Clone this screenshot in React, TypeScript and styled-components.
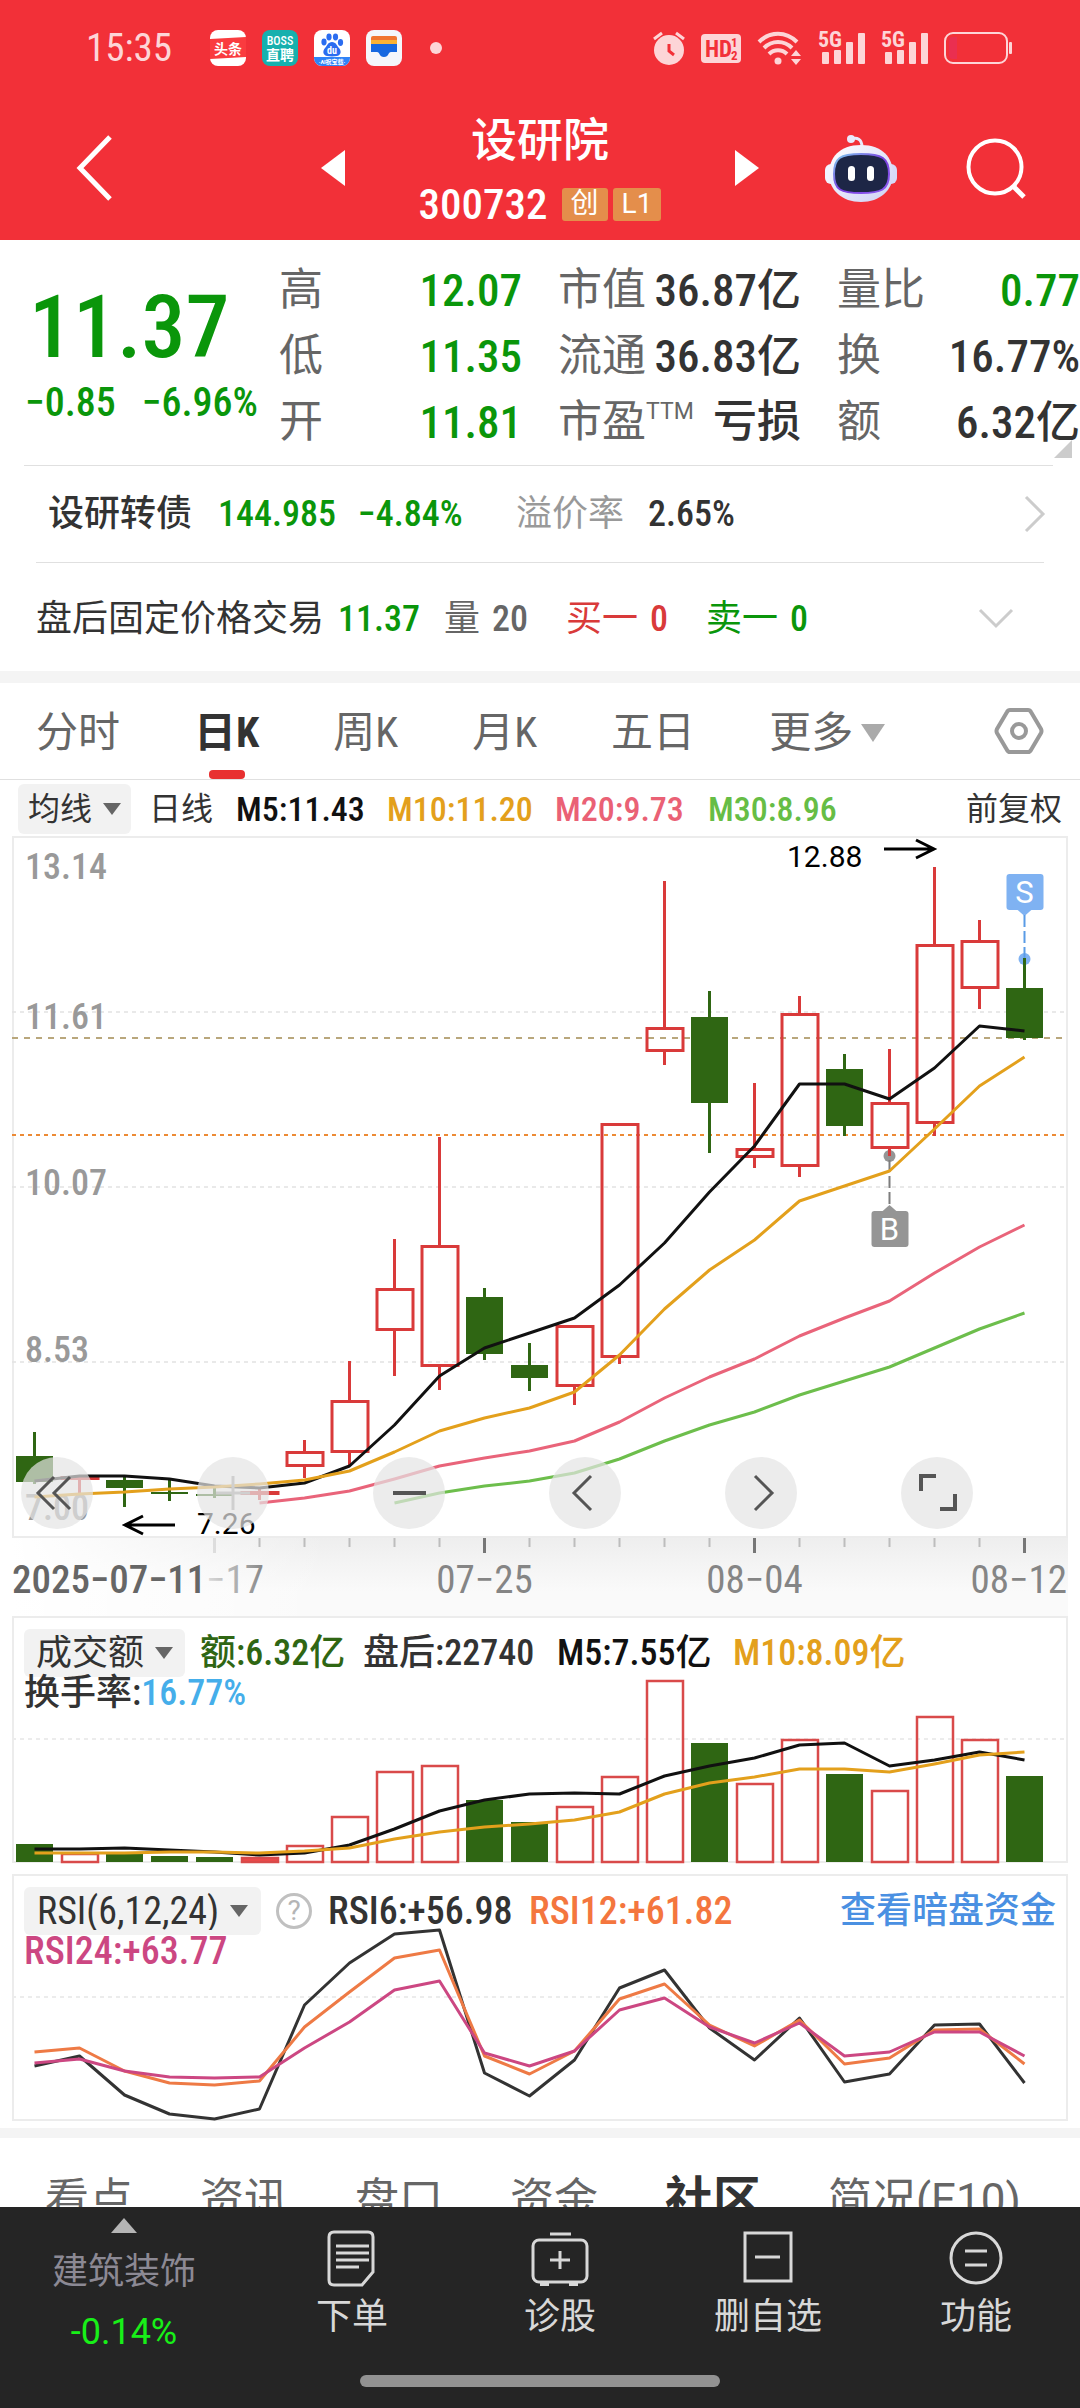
import React from 'react';
import styled, { createGlobalStyle } from 'styled-components';

const GREEN = '#0a960a';
const CANDLE_GREEN = '#2f6613';
const RED = '#d93a3a';
const ORANGE = '#e3a01c';
const FONT = "'Roboto Condensed', Roboto, 'Noto Sans CJK SC', sans-serif";
const WIDE_FONT = "Roboto, 'Noto Sans CJK SC', sans-serif";

const GlobalStyle = createGlobalStyle`
  * { box-sizing: border-box; }
  body { margin: 0; background: #fff; font-family: ${FONT}; color: #333; }
  button, select {
    font: inherit; color: inherit; background: none; border: 0; margin: 0; padding: 0;
    line-height: inherit; cursor: pointer;
  }
  svg { display: block; overflow: visible; }
  h1, dl, dd, dt { margin: 0; font-weight: inherit; }
`;

/* ---------- shell ---------- */

const Screen = styled.div`
  height: 100vh;
  display: flex;
  flex-direction: column;
  overflow: hidden;
  line-height: 1;
`;

const Content = styled.main`
  flex: 1;
  min-height: 0;
  overflow: hidden;
`;

const Divider = styled.div`
  height: ${(p: { $h: number }) => p.$h}px;
  background: #f4f4f4;
`;

/* ---------- header ---------- */

const Top = styled.header`
  flex: none;
  background: #f23038;
  color: #fff;
`;

const StatusBar = styled.div`
  height: 96px;
  padding: 0 68px 0 86px;
  display: flex;
  align-items: center;
  justify-content: space-between;
  color: #fdd5d7;
`;

const StatusGroup = styled.div`
  display: flex;
  align-items: center;
  gap: 16px;
`;

const Clock = styled.time`
  width: 108px;
  font-size: 39px;
`;

const TitleBar = styled.div`
  height: 144px;
  display: grid;
  grid-template-columns: 1fr 438px 1fr;
  align-items: center;
`;

const IconButton = styled.button`
  display: flex;
  align-items: center;
`;

const BackWrap = styled.div`
  padding-left: 76px;
`;

const Switcher = styled.div`
  display: flex;
  align-items: center;
  justify-content: space-between;
`;

const StockName = styled.div`
  padding-top: 6px;
  display: flex;
  flex-direction: column;
  align-items: center;
  gap: 20px;
`;

const Name = styled.h1`
  font-size: 46px;
  font-weight: 500;
`;

const CodeRow = styled.div`
  display: flex;
  align-items: center;
  gap: 5px;
  font-size: 43px;
  font-weight: 500;
`;

const Code = styled.span`
  padding-right: 9px;
`;

const Badge = styled.span`
  height: 33px;
  padding: 0 9px;
  display: flex;
  align-items: center;
  border-radius: 3px;
  background: #e48e4b;
  font-family: ${WIDE_FONT};
  font-size: 28px;
  font-weight: 400;
`;

const HeaderActions = styled.div`
  display: flex;
  align-items: center;
  justify-content: flex-end;
  gap: 68px;
  padding-right: 54px;
`;

/* ---------- quote ---------- */

const Quote = styled.section`
  display: grid;
  grid-template-columns: 279px 1fr;
  padding: 17px 0 10px;
  position: relative;
`;

const PriceBlock = styled.div`
  padding: 34px 0 0 25px;
  color: ${GREEN};
  font-weight: 500;
`;

const Price = styled.div`
  padding-left: 4px;
  font-size: 88px;
  line-height: 72px;
`;

const Change = styled.div`
  margin-top: 20px;
  display: flex;
  gap: 26px;
  font-size: 40px;
  white-space: nowrap;
`;

const Stats = styled.dl`
  display: grid;
  grid-template-columns: repeat(3, 1fr);
  column-gap: 36px;
`;

const Stat = styled.div`
  height: 66px;
  display: flex;
  align-items: center;
  justify-content: space-between;
  white-space: nowrap;
`;

const StatLabel = styled.dt`
  font-size: 44px;
  color: #666;
  display: flex;
`;

const Sup = styled.span`
  font-family: ${WIDE_FONT};
  font-size: 23px;
`;

const StatValue = styled.dd<{ $color?: string }>`
  font-size: 44px;
  font-weight: 500;
  color: ${(p) => p.$color || '#333'};
`;

const Num = styled.span`
  font-size: 45px;
`;

const Corner = styled.i`
  position: absolute;
  right: 8px;
  bottom: 7px;
  border-left: 18px solid transparent;
  border-bottom: 18px solid #ccc;
`;

const Rule = styled.hr<{ $l: number; $r: number }>`
  height: 1px;
  border: 0;
  margin: 0 ${(p) => p.$r}px 0 ${(p) => p.$l}px;
  background: #e0e0e0;
`;

const InfoRow = styled.section<{ $cols: string; $h: number; $l: number; $r: number }>`
  height: ${(p) => p.$h}px;
  padding: 0 ${(p) => p.$r}px 0 ${(p) => p.$l}px;
  display: grid;
  grid-template-columns: ${(p) => p.$cols};
  align-items: center;
  font-size: 36px;
  white-space: nowrap;
`;

const FixedPriceRow = styled(InfoRow)`
  padding-top: 3px;
`;

const Cell = styled.span<{ $color?: string; $num?: boolean; $w?: number }>`
  color: ${(p) => p.$color || '#333'};
  font-size: 36px;
  font-weight: ${(p) => p.$w || (p.$num ? 500 : 400)};
`;

const End = styled.button`
  justify-self: end;
`;

/* ---------- period tabs ---------- */

const PeriodTabs = styled.nav`
  height: 97px;
  padding: 0 36px;
  display: flex;
  align-items: stretch;
  justify-content: space-between;
  border-bottom: 1px solid #e0e0e0;
`;

const TabGroup = styled.div`
  display: flex;
  gap: 74px;
`;

const Tab = styled.button<{ $active?: boolean }>`
  padding-top: 4px;
  display: flex;
  align-items: center;
  gap: 8px;
  position: relative;
  font-size: 42px;
  color: ${(p) => (p.$active ? '#333' : '#666')};
  font-weight: ${(p) => (p.$active ? 700 : 400)};
  &::after {
    content: '';
    display: ${(p) => (p.$active ? 'block' : 'none')};
    position: absolute;
    left: 50%;
    bottom: 0;
    width: 36px;
    height: 9px;
    margin-left: -18px;
    border-radius: 4px;
    background: #e83030;
  }
`;

/* ---------- legends ---------- */

const Legend = styled.div<{ $cols: string }>`
  display: grid;
  grid-template-columns: ${(p) => p.$cols};
  align-items: center;
  white-space: nowrap;
`;

const MaLegend = styled(Legend)`
  height: 56px;
  padding: 2px 18px 0;
  font-size: 32px;
`;

const Tag = styled.span<{ $color?: string }>`
  color: ${(p) => p.$color || '#333'};
`;

const ValueTag = styled(Tag)`
  font-weight: 500;
`;

const MaTag = styled(ValueTag)`
  font-size: 34px;
`;

const Picker = styled.label<{ $h: number; $pad: number }>`
  justify-self: start;
  height: ${(p) => p.$h}px;
  padding: 0 ${(p) => p.$pad}px;
  display: inline-flex;
  align-items: center;
  gap: 10px;
  border-radius: 6px;
  background: #f2f2f2;
`;

const PickerSelect = styled.select`
  appearance: none;
  height: 100%;
  outline: none;
`;

/* ---------- charts ---------- */

const Frame = styled.section`
  margin: 0 12px;
  border: 2px solid #ececec;
  display: grid;
  position: relative;
`;

const Plot = styled.svg`
  grid-area: 1 / 1;
  width: 100%;
  height: auto;
`;

const PanelLegend = styled.div<{ $size: number }>`
  grid-area: 1 / 1;
  z-index: 1;
  padding: 11px 10px 0;
  font-size: ${(p) => p.$size}px;
`;

const SecondLine = styled.div`
  line-height: 32px;
`;

const ChartTools = styled.div`
  position: absolute;
  left: 7px;
  right: 93px;
  bottom: 7px;
  display: flex;
  justify-content: space-between;
`;

const RoundButton = styled.button`
  width: 72px;
  height: 72px;
  border-radius: 50%;
  background: rgba(228, 228, 228, 0.7);
  display: flex;
  align-items: center;
  justify-content: center;
`;

const Axis = styled.div`
  margin: 0 12px;
  padding-bottom: 2px;
  background: linear-gradient(90deg, #fff, rgba(255, 255, 255, 0) 30%),
    linear-gradient(#eeeeee, #fafafa 70%);
`;

const Space = styled.div<{ $h: number }>`
  height: ${(p) => p.$h}px;
`;

const HelpButton = styled.button`
  width: 36px;
  height: 36px;
  border: 3px solid #c0c0c0;
  border-radius: 50%;
  color: #b5b5b5;
  font-family: ${WIDE_FONT};
  font-size: 28px;
  line-height: 30px;
  text-align: center;
`;

const FundLink = styled.a`
  justify-self: end;
  font-size: 36px;
  font-weight: 500;
  color: #4a90e2;
  text-decoration: none;
`;

/* ---------- lower tabs and dock ---------- */

const InfoTabs = styled.nav`
  height: 124px;
  padding-left: 45px;
  display: flex;
  align-items: center;
  gap: 67px;
  font-family: ${WIDE_FONT};
  white-space: nowrap;
`;

const InfoTab = styled.button<{ $active?: boolean }>`
  font-size: ${(p) => (p.$active ? 48 : 44)}px;
  font-weight: ${(p) => (p.$active ? 700 : 400)};
  color: ${(p) => (p.$active ? '#333' : '#666')};
`;

const Dock = styled.footer`
  flex: none;
  height: 201px;
  background: #252525;
  color: #d8d8d8;
  display: flex;
  flex-direction: column;
  justify-content: space-between;
  padding-bottom: 21px;
`;

const DockRow = styled.nav`
  display: grid;
  grid-template-columns: 248px repeat(4, 1fr);
`;

const DockItem = styled.button`
  padding-top: 22px;
  display: flex;
  flex-direction: column;
  align-items: center;
  gap: 12px;
  font-size: 36px;
`;

const Sector = styled.button`
  padding: 11px 0 0;
  display: flex;
  flex-direction: column;
  align-items: center;
  font-size: 36px;
  color: #8c8994;
`;

const SectorName = styled.span`
  padding: 21px 0 24px;
`;

const SectorChange = styled.span`
  font-family: ${WIDE_FONT};
  color: #18f018;
`;

const HomeBar = styled.i`
  width: 360px;
  height: 12px;
  border-radius: 6px;
  background: #929292;
  align-self: center;
`;

/* ---------- data ---------- */

const stats: { label: string; sup?: string; num?: string; unit?: string; color?: string }[] = [
  { label: '高', num: '12.07', color: GREEN },
  { label: '市值', num: '36.87', unit: '亿' },
  { label: '量比', num: '0.77', color: GREEN },
  { label: '低', num: '11.35', color: GREEN },
  { label: '流通', num: '36.83', unit: '亿' },
  { label: '换', num: '16.77%' },
  { label: '开', num: '11.81', color: GREEN },
  { label: '市盈', sup: 'TTM', unit: '亏损' },
  { label: '额', num: '6.32', unit: '亿' },
];

type Candle = [up: 0 | 1, high: number, top: number, bottom: number, low: number];
const candles: Candle[] = [
  [0, 1432, 1456, 1482, 1484],
  [1, 1475, 1476, 1479, 1493],
  [0, 1476, 1480, 1488, 1507],
  [0, 1480, 1492, 1494, 1501],
  [0, 1487, 1494, 1496, 1498],
  [1, 1488, 1491, 1494, 1500],
  [1, 1440, 1451, 1467, 1478],
  [1, 1361, 1400, 1453, 1466],
  [1, 1239, 1288, 1331, 1376],
  [1, 1137, 1245, 1367, 1390],
  [0, 1288, 1297, 1354, 1360],
  [0, 1343, 1365, 1378, 1391],
  [1, 1325, 1325, 1387, 1405],
  [1, 1123, 1123, 1358, 1364],
  [1, 881, 1027, 1052, 1065],
  [0, 991, 1017, 1103, 1153],
  [1, 1083, 1148, 1158, 1168],
  [1, 996, 1013, 1167, 1177],
  [0, 1054, 1069, 1126, 1136],
  [1, 1049, 1102, 1149, 1156],
  [1, 867, 944, 1124, 1136],
  [1, 920, 940, 989, 1009],
  [0, 958, 988, 1038, 1040],
];

const ma5 = [1481, 1476, 1476, 1479, 1486, 1488, 1483, 1466, 1425, 1376, 1348, 1333, 1318, 1285, 1243, 1192, 1146, 1084, 1084, 1099, 1068, 1026, 1031];
const ma10 = [1497, 1494, 1492, 1489, 1487, 1484, 1480, 1471, 1452, 1431, 1418, 1408, 1392, 1355, 1309, 1270, 1240, 1201, 1186, 1171, 1129, 1086, 1057];
const ma20 = [1503, 1498, 1491, 1479, 1466, 1458, 1451, 1441, 1422, 1398, 1377, 1359, 1336, 1318, 1301, 1273, 1247, 1225];
const ma30 = [1503, 1493, 1486, 1481, 1473, 1459, 1441, 1425, 1412, 1395, 1381, 1367, 1348, 1329, 1313];

const volume = [18, 9, 9, 6, 5, 5, 17, 46, 91, 97, 62, 40, 56, 86, 182, 119, 79, 123, 88, 72, 146, 123, 86];
const volMa5 = [13, 13, 14, 12, 10, 7, 9, 17, 33, 51, 62, 68, 69, 68, 86, 96, 104, 117, 119, 96, 102, 110, 102];
const volMa10 = [9, 9, 9, 10, 10, 9, 11, 14, 23, 30, 35, 38, 42, 50, 68, 79, 85, 93, 93, 90, 98, 107, 110];

const rsi6 = [54, 64, 25, 6, 1, 11, 115, 157, 186, 190, 47, 24, 60, 132, 150, 92, 60, 102, 38, 46, 95, 96, 37];
const rsi12 = [68, 72, 49, 37, 35, 39, 93, 128, 162, 170, 64, 46, 69, 121, 136, 95, 74, 100, 56, 62, 90, 91, 56];
const rsi24 = [57, 61, 49, 43, 42, 43, 72, 98, 130, 139, 67, 54, 69, 110, 122, 93, 77, 97, 64, 68, 88, 88, 64];

const PANEL_H = 243;
const xAt = (i: number) => 34.5 + i * 45;
const up = (v: number) => PANEL_H + 1 - v;

/* ---------- small parts ---------- */

const Line = ({ ys, start = 0, color }: { ys: number[]; start?: number; color: string }) => (
  <polyline
    points={ys.map((y, i) => `${xAt(i + start)},${y}`).join(' ')}
    fill="none"
    stroke={color}
    strokeWidth="3"
    strokeLinejoin="round"
  />
);

const Grid = ({ y, color = '#e2e2e2', dash = '4 4', w = 1.5 }: { y: number; color?: string; dash?: string; w?: number }) => (
  <line x1="12" x2="1066" y1={y} y2={y} stroke={color} strokeWidth={w} strokeDasharray={dash} />
);

const Caret = ({ w = 18, h = 12, color = '#666' }: { w?: number; h?: number; color?: string }) => (
  <svg width={w} height={h} viewBox="0 0 18 12" preserveAspectRatio="none" aria-hidden="true">
    <path d="M0 0h18L9 12z" fill={color} />
  </svg>
);

const Picked = ({ label, name, h, pad }: { label: string; name: string; h: number; pad: number }) => (
  <Picker $h={h} $pad={pad}>
    <PickerSelect aria-label={name}>
      <option>{label}</option>
    </PickerSelect>
    <Caret />
  </Picker>
);

const Signal = () => (
  <svg width="47" height="36" viewBox="0 0 47 36" fill="#fdd5d7" aria-label="5G">
    <text x="0" y="17" fontSize="22" fontWeight="700" fontFamily={FONT}>5G</text>
    <rect x="4" y="22" width="7" height="12" rx="1" />
    <rect x="16" y="20" width="7" height="14" rx="1" />
    <rect x="28" y="12" width="7" height="22" rx="1" />
    <rect x="40" y="3" width="7" height="31" rx="1" />
  </svg>
);

const LeftApps = () => (
  <StatusGroup>
    <svg width="36" height="36" viewBox="0 0 36 36" aria-label="头条">
      <rect width="36" height="36" rx="8" fill="#fff" />
      <path d="M0 9l36-2v20L0 29z" fill="#fa3b3f" />
      <text x="18" y="24" fontSize="14" fontWeight="700" fill="#fff" textAnchor="middle" fontFamily={FONT}>头条</text>
    </svg>
    <svg width="36" height="36" viewBox="0 0 36 36" aria-label="BOSS直聘">
      <rect width="36" height="36" rx="8" fill="#16b0ae" />
      <text x="18" y="15" fontSize="12" fontWeight="500" fill="#fff" textAnchor="middle" fontFamily={FONT}>BOSS</text>
      <text x="18" y="30" fontSize="14" fontWeight="700" fill="#fff" textAnchor="middle" fontFamily={FONT}>直聘</text>
    </svg>
    <svg width="36" height="36" viewBox="0 0 36 36" aria-label="百度">
      <clipPath id="baiduClip"><rect width="36" height="36" rx="8" /></clipPath>
      <g clipPath="url(#baiduClip)">
        <rect width="36" height="36" fill="#fff" />
        <g fill="#2a6cf0">
          <ellipse cx="10" cy="12" rx="2.6" ry="3.4" />
          <ellipse cx="15" cy="7" rx="2.6" ry="3.4" />
          <ellipse cx="21.5" cy="7" rx="2.6" ry="3.4" />
          <ellipse cx="26.5" cy="12.5" rx="2.6" ry="3.4" />
          <path d="M18 12c4 0 5 4 7 6s3 7-2 8c-3 .5-7 .5-10 0-5-1-4-6-2-8s3-6 7-6z" />
          <rect y="27" width="36" height="9" fill="#2f83f7" />
        </g>
      </g>
      <text x="18" y="24" fontSize="10" fontWeight="700" fill="#fff" textAnchor="middle" fontFamily={FONT}>du</text>
      <text x="18" y="34" fontSize="6" fontWeight="700" fill="#fff" textAnchor="middle" fontFamily={FONT}>·AI祝宝载·</text>
    </svg>
    <svg width="36" height="36" viewBox="0 0 36 36" aria-hidden="true">
      <rect width="36" height="36" rx="8" fill="#f4f6fb" />
      <path d="M5 8q0-2 2-2h22q2 0 2 2v4H5z" fill="#f07430" />
      <path d="M5 10h26v6H5z" fill="#f9b233" />
      <path d="M5 14h26v8h-6c-3 0-2 5-7 5s-4-5-7-5H5z" fill="#1668e0" />
    </svg>
    <svg width="62" height="36" viewBox="0 0 62 36" aria-hidden="true">
      <circle cx="18" cy="18" r="6" fill="#fdd5d7" />
    </svg>
  </StatusGroup>
);

const RightStatus = () => (
  <StatusGroup>
    <svg width="32" height="36" viewBox="1 0 32 36" aria-hidden="true">
      <circle cx="17" cy="20" r="15" fill="#fdd5d7" />
      <path d="M2 9l8-6M32 9l-8-6" stroke="#fdd5d7" strokeWidth="3" />
      <path d="M17 14v7l5 4" stroke="#f23038" strokeWidth="3" fill="none" />
    </svg>
    <svg width="40" height="29" viewBox="0 0 40 29" aria-label="HD 1 2">
      <rect width="40" height="29" rx="4" fill="#fdd5d7" />
      <g fill="#f23038" fontFamily={FONT} fontWeight="700">
        <text x="4" y="23" fontSize="23">HD</text>
        <text x="30" y="13" fontSize="13">1</text>
        <text x="30" y="26" fontSize="13">2</text>
      </g>
    </svg>
    <svg width="45" height="36" viewBox="0 0 45 36" aria-hidden="true">
      <g fill="none" stroke="#fdd5d7" strokeWidth="4">
        <path d="M2 12c11-11 27-11 38 0" />
        <path d="M7 18c8-8 20-8 28 0" />
        <path d="M12 24c5-5 13-5 18 0" />
      </g>
      <circle cx="21" cy="31" r="3.5" fill="#fdd5d7" />
      <path d="M34 26l5-6 5 6zM34 29l5 6 5-6z" fill="#fdd5d7" />
    </svg>
    <Signal />
    <Signal />
    <svg width="68" height="32" viewBox="0 0 68 32" aria-hidden="true">
      <rect x="1" y="1" width="62" height="30" rx="8" fill="none" stroke="#fdd5d7" strokeWidth="2" />
      <path d="M5 9q0-4 4-4h4v22H9q-4 0-4-4z" fill="#ea2f50" />
      <rect x="65" y="10" width="3" height="12" rx="1" fill="#fdd5d7" />
    </svg>
  </StatusGroup>
);

const Robot = () => (
  <svg width="74" height="70" viewBox="0 0 74 70" aria-hidden="true">
    <defs>
      <linearGradient id="shell" x1="0" y1="0" x2="1" y2="1">
        <stop offset="0" stopColor="#fff" />
        <stop offset="1" stopColor="#cdd0f5" />
      </linearGradient>
      <linearGradient id="glow" x1="0" y1="0" x2="1" y2="1">
        <stop offset="0" stopColor="#7fd0ee" />
        <stop offset="0.5" stopColor="#7a3fe0" />
        <stop offset="1" stopColor="#8c5cf0" />
      </linearGradient>
    </defs>
    <path d="M27 6c6-2 11 0 11 8" fill="none" stroke="#e9eafc" strokeWidth="3" />
    <circle cx="27" cy="6" r="4" fill="#e9eafc" />
    <rect x="1" y="31" width="12" height="20" rx="6" fill="#f2f3ff" />
    <rect x="61" y="31" width="12" height="20" rx="6" fill="#d7daf8" />
    <path d="M37 12c22 0 32 13 32 29S56 69 37 69 5 57 5 41s10-29 32-29z" fill="url(#shell)" />
    <path d="M37 21c21 0 28 4 28 20S57 60 37 60 10 57 10 41s6-20 27-20z" fill="#1d2646" stroke="url(#glow)" strokeWidth="2" />
    <rect x="24" y="33" width="7" height="15" rx="3.5" fill="#fff" />
    <rect x="43" y="33" width="7" height="15" rx="3.5" fill="#fff" />
  </svg>
);

const SettingsIcon = () => (
  <svg width="50" height="48" viewBox="0 0 50 48" fill="none" stroke="#999" strokeWidth="4" aria-hidden="true">
    <path d="M16 3h18q2 0 3 2l10 17q1 2 0 4L37 43q-1 2-3 2H16q-2 0-3-2L3 26q-1-2 0-4L13 5q1-2 3-2z" />
    <circle cx="25" cy="24" r="7" />
  </svg>
);

const toolIcons: [string, React.ReactNode][] = [
  ['最左', <path d="M17 4L1 20l16 16M33 4L17 20l16 16" />],
  ['放大', <path d="M20 3v34M3 20h34" stroke="#cfcfcf" />],
  ['缩小', <path d="M4 20h33" strokeWidth="4" />],
  ['向左', <path d="M26 3L9 20l17 17" />],
  ['向右', <path d="M14 3l17 17-17 17" />],
  ['全屏', <path d="M19 3H4v15M23 36h15V21" strokeWidth="4" />],
];

const dockItems: [string, React.ReactNode][] = [
  ['下单', <><path d="M8 3h34q5 0 5 5v35L36 56H8q-5 0-5-5V8q0-5 5-5z" /><path d="M10 17h33M10 24h33M10 31h33M10 38h23" /></>],
  ['诊股', <><rect x="-1" y="11" width="54" height="42" rx="6" /><path d="M26 22v18M16 31h20M16 5h21" /><path d="M6 55h9M35 55h9" strokeWidth="4" /></>],
  ['删自选', <><rect x="3" y="4" width="46" height="48" /><path d="M13 28h25" /></>],
  ['功能', <><circle cx="26" cy="29" r="25" /><path d="M15 22h22M15 36h22" /></>],
];

/* ---------- chart blocks ---------- */

const colorOf = (c: Candle) => (c[0] ? RED : CANDLE_GREEN);

const KLine = () => (
  <Frame aria-label="日K线图">
    <Plot viewBox="14 838 1052 698" fontFamily={FONT}>
      <Grid y={1012} />
      <Grid y={1187} />
      <Grid y={1362} />
      <Grid y={1038} color="#b9a77c" dash="6 6" w={2} />
      <Grid y={1135} color="#ec8a35" w={2} />
      <g fill="#999" fontSize="36" fontWeight="500">
        <text x="25" y="879">13.14</text>
        <text x="25" y="1029">11.61</text>
        <text x="25" y="1195">10.07</text>
        <text x="25" y="1362">8.53</text>
        <text x="25" y="1520">7.00</text>
      </g>
      <g fill="#959595">
        <circle cx={xAt(19)} cy="1156" r="6" />
        <path d={`M${xAt(19) - 8} 1212l8-7 8 7z`} />
        <rect x={xAt(19) - 18} y="1211" width="37" height="36" rx="3" />
        <line x1={xAt(19)} x2={xAt(19)} y1="1160" y2="1205" stroke="#7d7d7d" strokeWidth="2" strokeDasharray="12 4" />
      </g>
      <g fill="#7fb2f2">
        <circle cx={xAt(22)} cy="959" r="6" />
        <path d={`M${xAt(22) - 8} 909l8 7 8-7z`} />
        <rect x={xAt(22) - 18} y="874" width="37" height="36" rx="3" />
        <line x1={xAt(22)} x2={xAt(22)} y1="915" y2="958" stroke="#5a9be6" strokeWidth="2" strokeDasharray="12 4" />
      </g>
      <g fill="#fff" fontSize="31" textAnchor="middle" fontFamily={WIDE_FONT}>
        <text x={xAt(19)} y="1240">B</text>
        <text x={xAt(22)} y="903">S</text>
      </g>
      {candles.map((c, i) => {
        const [isUp, hi, t, b, lo] = c;
        const x = xAt(i);
        return (
          <g key={i} stroke={colorOf(c)} strokeWidth="3">
            <path d={`M${x} ${hi}V${t}M${x} ${b}V${lo}`} />
            {isUp ? (
              <rect x={x - 17.5} y={t + 1.5} width="36" height={Math.max(b - t - 3, 1)} fill="none" />
            ) : (
              <rect x={x - 18.5} y={t} width="37" height={b - t} fill={CANDLE_GREEN} stroke="none" />
            )}
          </g>
        );
      })}
      <Line ys={ma5} color="#111" />
      <Line ys={ma10} color={ORANGE} />
      <Line ys={ma20} start={5} color="#e9647a" />
      <Line ys={ma30} start={8} color="#6dbe4c" />
      <g fontSize="30" fill="#000" fontFamily={WIDE_FONT}>
        <text x="787" y="867">12.88</text>
        <text x="197" y="1534">7.26</text>
      </g>
      <path d="M884 849h50M916 840l18 9-18 9M175 1525h-50M143 1516l-18 9 18 9" fill="none" stroke="#000" strokeWidth="3" />
    </Plot>
    <ChartTools>
      {toolIcons.map(([name, icon]) => (
        <RoundButton key={name} aria-label={name}>
          <svg width="40" height="40" viewBox="0 0 40 40" fill="none" stroke="#555" strokeWidth="3">{icon}</svg>
        </RoundButton>
      ))}
    </ChartTools>
  </Frame>
);

const DateAxis = () => (
  <Axis>
    <Plot viewBox="12 1538 1056 76" fontFamily={FONT} fontSize="39" fill="#858585">
      <defs>
        <linearGradient id="dateFade" gradientUnits="userSpaceOnUse" x1="205" x2="262" y1="0" y2="0">
          <stop offset="0" stopColor="#ddd" />
          <stop offset="1" stopColor="#8a8a8a" />
        </linearGradient>
      </defs>
      {candles.map((_, i) => {
        if (i < 4) return null;
        const major = (i - 4) % 6 === 0;
        const color = i === 4 ? '#ddd' : major ? '#777' : '#bdbdbd';
        return (
          <line key={i} x1={xAt(i)} x2={xAt(i)} y1="1538" y2={major ? 1553 : 1547} stroke={color} strokeWidth={major ? 3 : 2} />
        );
      })}
      <text x="12" y="1593" fill="#666" fontWeight="500">2025−07−11</text>
      <text x="264" y="1593" fill="url(#dateFade)" textAnchor="end">−17</text>
      <text x={xAt(10)} y="1593" textAnchor="middle">07−25</text>
      <text x={xAt(16)} y="1593" textAnchor="middle">08−04</text>
      <text x="1067" y="1593" textAnchor="end">08−12</text>
    </Plot>
  </Axis>
);

const VolumePanel = () => (
  <Frame aria-label="成交额">
    <Plot viewBox={`14 0 1052 ${PANEL_H}`}>
      <Grid y={121} w={2} color="#ececec" />
      {volume.map((v, i) =>
        candles[i][0] ? (
          <rect key={i} x={xAt(i) - 17.5} y={up(v) + 1} width="36" height={v - 1} fill={i === 5 ? '#f04848' : 'none'} stroke="#d94a4a" strokeWidth="2.5" />
        ) : (
          <rect key={i} x={xAt(i) - 18.5} y={up(v)} width="37" height={v} fill={CANDLE_GREEN} />
        ),
      )}
      <Line ys={volMa5.map(up)} color="#111" />
      <Line ys={volMa10.map(up)} color={ORANGE} />
    </Plot>
    <PanelLegend $size={36}>
      <Legend $cols="176px 163px 194px 176px 1fr">
        <Picked label="成交额" name="指标" h={48} pad={12} />
        <ValueTag $color={CANDLE_GREEN}>额:6.32亿</ValueTag>
        <ValueTag>盘后:22740</ValueTag>
        <ValueTag $color="#111">M5:7.55亿</ValueTag>
        <ValueTag $color={ORANGE}>M10:8.09亿</ValueTag>
      </Legend>
      <SecondLine>
        <ValueTag>换手率:</ValueTag>
        <ValueTag $color="#45aeea">16.77%</ValueTag>
      </SecondLine>
    </PanelLegend>
  </Frame>
);

const RsiPanel = () => (
  <Frame aria-label="RSI">
    <Plot viewBox={`14 0 1052 ${PANEL_H}`}>
      <Grid y={121} w={2} color="#ececec" />
      <Line ys={rsi6.map(up)} color="#333" />
      <Line ys={rsi12.map(up)} color="#ee7a45" />
      <Line ys={rsi24.map(up)} color="#cc4782" />
    </Plot>
    <PanelLegend $size={38}>
      <Legend $cols="252px 52px 201px auto 1fr">
        <Picked label="RSI(6,12,24)" name="RSI指标" h={48} pad={13} />
        <HelpButton aria-label="帮助">?</HelpButton>
        <ValueTag>RSI6:+56.98</ValueTag>
        <ValueTag $color="#f4763e">RSI12:+61.82</ValueTag>
        <FundLink href="#fund">查看暗盘资金</FundLink>
      </Legend>
      <SecondLine>
        <ValueTag $color="#cc4782">RSI24:+63.77</ValueTag>
      </SecondLine>
    </PanelLegend>
  </Frame>
);

/* ---------- page ---------- */

export default function App() {
  return (
    <Screen>
      <GlobalStyle />
      <Top>
        <StatusBar>
          <StatusGroup>
            <Clock>15:35</Clock>
            <LeftApps />
          </StatusGroup>
          <RightStatus />
        </StatusBar>
        <TitleBar>
          <BackWrap>
            <IconButton aria-label="返回">
              <svg width="36" height="66" viewBox="0 0 36 66" fill="none" stroke="#fff" strokeWidth="5">
                <path d="M34 2L4 33l30 31" />
              </svg>
            </IconButton>
          </BackWrap>
          <Switcher>
            <IconButton aria-label="上一只">
              <svg width="24" height="36" viewBox="0 0 24 36" fill="#fff"><path d="M24 0v36L0 18z" /></svg>
            </IconButton>
            <StockName>
              <Name>设研院</Name>
              <CodeRow>
                <Code>300732</Code>
                <Badge>创</Badge>
                <Badge>L1</Badge>
              </CodeRow>
            </StockName>
            <IconButton aria-label="下一只">
              <svg width="24" height="36" viewBox="0 0 24 36" fill="#fff"><path d="M0 0v36l24-18z" /></svg>
            </IconButton>
          </Switcher>
          <HeaderActions>
            <IconButton aria-label="智能助手"><Robot /></IconButton>
            <IconButton aria-label="搜索">
              <svg width="60" height="60" viewBox="0 0 60 60" fill="none" stroke="#fff" strokeWidth="4">
                <circle cx="29" cy="29" r="26.5" />
                <path d="M47 48l11 11" strokeWidth="5" />
              </svg>
            </IconButton>
          </HeaderActions>
        </TitleBar>
      </Top>

      <Content>
        <Quote>
          <PriceBlock>
            <Price>11.37</Price>
            <Change>
              <span>−0.85</span>
              <span>−6.96%</span>
            </Change>
          </PriceBlock>
          <Stats>
            {stats.map((s) => (
              <Stat key={s.label}>
                <StatLabel>
                  {s.label}
                  {s.sup && <Sup>{s.sup}</Sup>}
                </StatLabel>
                <StatValue $color={s.color}>
                  {s.num && <Num>{s.num}</Num>}
                  {s.unit}
                </StatValue>
              </Stat>
            ))}
          </Stats>
          <Corner />
        </Quote>
        <Rule $l={24} $r={27} />
        <InfoRow $h={96} $l={48} $r={34} $cols="170px 140px 158px 132px auto 1fr">
          <Cell $w={500}>设研转债</Cell>
          <Cell $num $color={GREEN}>144.985</Cell>
          <Cell $num $color={GREEN}>−4.84%</Cell>
          <Cell $color="#999">溢价率</Cell>
          <Cell $num>2.65%</Cell>
          <End aria-label="转债详情">
            <svg width="22" height="36" viewBox="0 0 22 36" fill="none" stroke="#ccc" strokeWidth="3"><path d="M2 1l17 17L2 35" /></svg>
          </End>
        </InfoRow>
        <Rule $l={36} $r={36} />
        <FixedPriceRow $h={108} $l={36} $r={66} $cols="302px 106px 48px 74px 84px 56px 84px auto 1fr">
          <Cell>盘后固定价格交易</Cell>
          <Cell $num $color={GREEN}>11.37</Cell>
          <Cell $color="#666">量</Cell>
          <Cell $num $color="#666">20</Cell>
          <Cell $color={RED}>买一</Cell>
          <Cell $num $color={RED}>0</Cell>
          <Cell $color={GREEN}>卖一</Cell>
          <Cell $num $color={GREEN}>0</Cell>
          <End aria-label="展开">
            <svg width="36" height="22" viewBox="0 0 36 22" fill="none" stroke="#ccc" strokeWidth="3"><path d="M2 2l16 16L34 2" /></svg>
          </End>
        </FixedPriceRow>
        <Divider $h={12} />

        <PeriodTabs>
          <TabGroup>
            <Tab>分时</Tab>
            <Tab $active>日K</Tab>
            <Tab>周K</Tab>
            <Tab>月K</Tab>
            <Tab>五日</Tab>
            <Tab>更多<Caret w={24} h={18} color="#aaa" /></Tab>
          </TabGroup>
          <IconButton aria-label="设置"><SettingsIcon /></IconButton>
        </PeriodTabs>
        <MaLegend $cols="131px 87px 151px 168px 153px 1fr auto">
          <Picked label="均线" name="主图指标" h={50} pad={10} />
          <Tag>日线</Tag>
          <MaTag $color="#111">M5:11.43</MaTag>
          <MaTag $color={ORANGE}>M10:11.20</MaTag>
          <MaTag $color="#ea6175">M20:9.73</MaTag>
          <MaTag $color="#66bd45">M30:8.96</MaTag>
          <Tag>前复权</Tag>
        </MaLegend>

        <KLine />
        <DateAxis />
        <VolumePanel />
        <Space $h={11} />
        <RsiPanel />
        <Space $h={7} />
        <Divider $h={10} />

        <InfoTabs>
          <InfoTab>看点</InfoTab>
          <InfoTab>资讯</InfoTab>
          <InfoTab>盘口</InfoTab>
          <InfoTab>资金</InfoTab>
          <InfoTab $active>社区</InfoTab>
          <InfoTab>简况(E10)</InfoTab>
        </InfoTabs>
      </Content>

      <Dock>
        <DockRow>
          <Sector>
            <svg width="26" height="15" viewBox="0 0 26 15" fill="#b5b5b5"><path d="M13 0l13 15H0z" /></svg>
            <SectorName>建筑装饰</SectorName>
            <SectorChange>-0.14%</SectorChange>
          </Sector>
          {dockItems.map(([name, icon]) => (
            <DockItem key={name}>
              <svg width="56" height="58" viewBox="-2 0 56 58" fill="none" stroke="#d8d8d8" strokeWidth="3">{icon}</svg>
              {name}
            </DockItem>
          ))}
        </DockRow>
        <HomeBar />
      </Dock>
    </Screen>
  );
}
